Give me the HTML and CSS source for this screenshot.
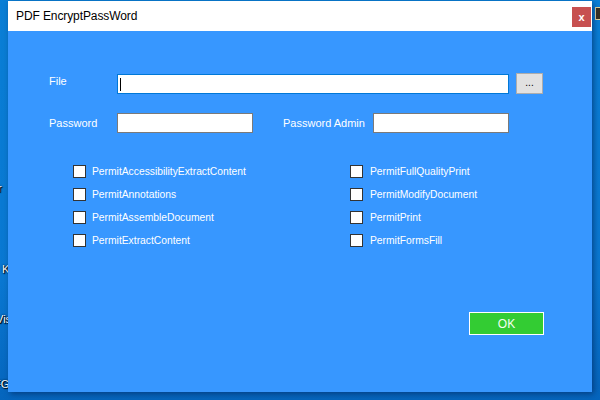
FILE: index.html
```html
<!DOCTYPE html>
<html>
<head>
<meta charset="utf-8">
<link rel="stylesheet" href="styles.css">
</head>
<body>
<div class="desktop">
  <span class="dicon d1">ar</span>
  <span class="dicon d2">K</span>
  <span class="dicon d3">Vis</span>
  <span class="dicon d4">FG</span>
  <span class="dicon d5"></span>
  <div class="window">
    <div class="titlebar">
      <span class="title">PDF EncryptPassWord</span>
      <span class="close">x</span>
    </div>
    <div class="body">
      <div class="row row-file">
        <label class="lbl">File</label>
        <div class="input input-file"><span class="caret"></span></div>
        <button class="browse">...</button>
      </div>
      <div class="row row-pass">
        <label class="lbl">Password</label>
        <div class="input input-short"></div>
        <label class="lbl lbl-admin">Password Admin</label>
        <div class="input input-short"></div>
      </div>
      <div class="checks">
        <div class="col">
          <div class="chk"><span class="box"></span>PermitAccessibilityExtractContent</div>
          <div class="chk"><span class="box"></span>PermitAnnotations</div>
          <div class="chk"><span class="box"></span>PermitAssembleDocument</div>
          <div class="chk"><span class="box"></span>PermitExtractContent</div>
        </div>
        <div class="col col-right">
          <div class="chk"><span class="box"></span>PermitFullQualityPrint</div>
          <div class="chk"><span class="box"></span>PermitModifyDocument</div>
          <div class="chk"><span class="box"></span>PermitPrint</div>
          <div class="chk"><span class="box"></span>PermitFormsFill</div>
        </div>
      </div>
      <div class="actions">
        <button class="ok">OK</button>
      </div>
    </div>
  </div>
</div>
</body>
</html>
```
FILE: styles.css
```css
html, body {
  margin: 0;
  padding: 0;
}
body {
  width: 600px;
  height: 400px;
  overflow: hidden;
  font-family: "Liberation Sans", Arial, sans-serif;
}
.desktop {
  position: relative;
  width: 600px;
  height: 400px;
  box-sizing: border-box;
  padding: 1px 0 0 8px;
  background: linear-gradient(180deg, #0a7fd6 0%, #0a78d2 70%, #0565bd 100%);
}
.dicon {
  position: absolute;
  color: #fff;
  font-size: 11px;
  text-shadow: 0 0 2px #000, 1px 1px 1px #000;
}
.d1 { left: -8px; top: 182px; }
.d2 { left: 2px; top: 263px; }
.d3 { left: -4px; top: 313px; }
.d4 { left: -6px; top: 378px; }
.d5 {
  left: 595px; top: 7px; width: 6px; height: 11px;
  background: #3a3020; border: 1px solid #e8d8a0;
}
.window {
  position: relative;
  width: 584px;
  height: 391px;
  display: flex;
  flex-direction: column;
  box-shadow: 2px 2px 6px rgba(0, 30, 80, 0.55);
}
.titlebar {
  height: 30px;
  background: #fff;
  display: flex;
  align-items: center;
  justify-content: space-between;
  padding-left: 8px;
  padding-right: 1px;
}
.title {
  font-size: 12px;
  color: #000;
  letter-spacing: -0.1px;
}
.close {
  width: 19px;
  height: 20px;
  margin-top: 2px;
  background: #c75050;
  color: #fff;
  font-weight: bold;
  font-size: 11px;
  display: flex;
  align-items: center;
  justify-content: center;
}
.body {
  flex: 1;
  background: #3797ff;
  padding: 43px 0 0 41px;
  color: #fff;
}
.row {
  display: flex;
  align-items: center;
}
.lbl {
  width: 68px;
  flex-shrink: 0;
  font-size: 11px;
}
.row-file .lbl {
  margin-top: -6px;
}
.input {
  height: 20px;
  flex-shrink: 0;
  box-sizing: border-box;
  background: #fff;
  border: 1px solid #7a7a7a;
}
.input-file {
  width: 392px;
  border-color: #0078d7;
  display: flex;
  align-items: center;
  padding-left: 2px;
}
.caret {
  width: 1px;
  height: 13px;
  background: #000;
}
.browse {
  margin-left: 7px;
  width: 27px;
  height: 21px;
  margin-top: -1px;
  box-sizing: border-box;
  background: #e1e1e1;
  border: 1px solid #adadad;
  font-family: "Liberation Sans", Arial, sans-serif;
  font-size: 10px;
  color: #000;
  padding: 0 0 3px;
}
.row-pass {
  margin-top: 19px;
}
.input-short {
  width: 136px;
}
.lbl-admin {
  margin-left: 30px;
  width: 90px;
}
.checks {
  display: flex;
  margin-top: 32px;
  padding-left: 24px;
}
.col {
  width: 277px;
  flex-shrink: 0;
  display: flex;
  flex-direction: column;
  gap: 10px;
}
.chk {
  display: flex;
  align-items: center;
  height: 13px;
  font-size: 10.3px;
  white-space: nowrap;
}
.box {
  width: 13px;
  height: 13px;
  box-sizing: border-box;
  background: #fff;
  border: 1px solid #333;
  margin-right: 6px;
}
.col-right .box {
  margin-right: 7px;
}
.actions {
  display: flex;
  justify-content: flex-end;
  padding-right: 48px;
  margin-top: 65px;
}
.ok {
  width: 75px;
  height: 23px;
  box-sizing: border-box;
  background: #33cc33;
  border: 1px solid #fff;
  color: #f4fff0;
  font-family: "Liberation Sans", Arial, sans-serif;
  font-size: 12px;
  padding: 0;
}
```
